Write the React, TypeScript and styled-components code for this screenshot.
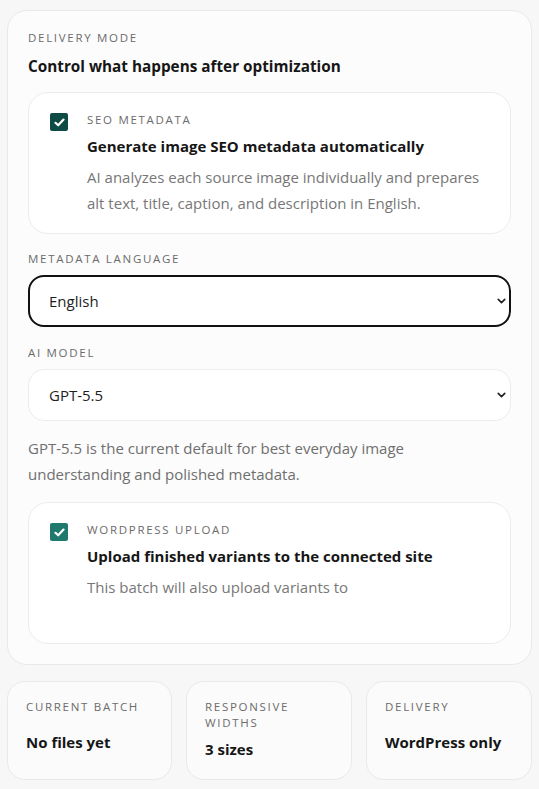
import React from 'react';
import styled, { createGlobalStyle } from 'styled-components';
import { ChevronDown } from 'lucide-react';

const GlobalStyle = createGlobalStyle`
  html, body {
    margin: 0;
    padding: 0;
    background: #f7f7f7;
  }
  body {
    font-family: 'Open Sans', 'Noto Sans', Arial, sans-serif;
    color: #1c1c1c;
  }
  * {
    box-sizing: border-box;
  }
`;

const Page = styled.div`
  padding: 10px 7px 11px 7px;
  display: flex;
  flex-direction: column;
  gap: 16px;
`;

const Panel = styled.section`
  background: #fcfcfc;
  border: 1px solid #e9e9e9;
  border-radius: 20px;
  padding: 19px 20px 20px 20px;
  display: flex;
  flex-direction: column;
`;

const Eyebrow = styled.div<{ gap?: number }>`
  font-size: 11.5px;
  letter-spacing: 1.7px;
  text-transform: uppercase;
  color: #6b6b6b;
  line-height: 16px;
  margin-bottom: ${({ gap }) => gap ?? 0}px;
`;

const PanelTitle = styled.h2`
  margin: 9px 0 15px 0;
  font-size: 15.3px;
  font-weight: 700;
  line-height: 22px;
  color: #161616;
`;

const OptionCard = styled.label<{ gapAfter?: number }>`
  display: flex;
  gap: 19px;
  background: #ffffff;
  border: 1px solid #ececec;
  border-radius: 20px;
  padding: 19px 20px 17px 21px;
  margin-bottom: ${({ gapAfter }) => gapAfter ?? 0}px;
`;

const Check = styled.span<{ tone: string }>`
  flex: none;
  width: 18px;
  height: 18px;
  margin-top: 1px;
  border-radius: 2px;
  background: ${({ tone }) => tone};
  display: flex;
  align-items: center;
  justify-content: center;
`;

const OptionBody = styled.div`
  display: flex;
  flex-direction: column;
`;

const OptionTitle = styled.div`
  margin-top: 7px;
  font-size: 15px;
  font-weight: 700;
  line-height: 22px;
  color: #161616;
`;

const OptionText = styled.p`
  margin: 7px 0 0 0;
  font-size: 15px;
  line-height: 26px;
  color: #777777;
  min-height: 52px;
`;

const SelectWrap = styled.div<{ gapAfter?: number }>`
  position: relative;
  margin-bottom: ${({ gapAfter }) => gapAfter ?? 0}px;
`;

const Select = styled.select<{ focused?: boolean }>`
  width: 100%;
  height: 52px;
  appearance: none;
  -webkit-appearance: none;
  font-family: 'Open Sans', 'Noto Sans', Arial, sans-serif;
  font-size: 15px;
  color: #1e1e1e;
  background: #ffffff;
  border: ${({ focused }) => (focused ? '2px solid #111111' : '1px solid #ececec')};
  border-radius: 16px;
  padding: 0 40px 0 ${({ focused }) => (focused ? 19 : 20)}px;
  outline: none;
`;

const Chevron = styled(ChevronDown)`
  position: absolute;
  right: 3px;
  top: 50%;
  transform: translateY(-50%);
  pointer-events: none;
  color: #222;
`;

const Helper = styled.p`
  margin: 14px 0 15px 0;
  max-width: 400px;
  font-size: 15px;
  line-height: 26px;
  color: #6f6f6f;
`;

const StatRow = styled.div`
  display: grid;
  grid-template-columns: 165px 166px 166px;
  justify-content: space-between;
`;

const StatCard = styled.div`
  background: #fbfbfb;
  border: 1px solid #e9e9e9;
  border-radius: 18px;
  height: 99px;
  padding: 17px 18px 0 18px;
  display: flex;
  flex-direction: column;
`;

const StatLabel = styled.div`
  font-size: 11.5px;
  letter-spacing: 1.7px;
  text-transform: uppercase;
  color: #6b6b6b;
  line-height: 16px;
`;

const StatValue = styled.div<{ wrapped?: boolean }>`
  margin-top: ${({ wrapped }) => (wrapped ? 7 : 16)}px;
  font-size: 15px;
  font-weight: 700;
  line-height: 22px;
  color: #161616;
`;

const Tick = () => (
  <svg width="11" height="9" viewBox="0 0 11 9" fill="none">
    <path d="M1.5 4.8 L4.2 7.3 L9.5 1.6" stroke="#fff" strokeWidth="2.2" strokeLinecap="round" strokeLinejoin="round" />
  </svg>
);

const stats = [
  { label: 'Current batch', value: 'No files yet' },
  { label: 'Responsive widths', value: '3 sizes', wrapped: true },
  { label: 'Delivery', value: 'WordPress only' },
];

export default function App() {
  return (
    <>
      <GlobalStyle />
      <Page>
        <Panel>
          <Eyebrow>Delivery mode</Eyebrow>
          <PanelTitle>Control what happens after optimization</PanelTitle>

          <OptionCard gapAfter={17}>
            <Check tone="#0f4b45">
              <Tick />
            </Check>
            <OptionBody>
              <Eyebrow>SEO metadata</Eyebrow>
              <OptionTitle>Generate image SEO metadata automatically</OptionTitle>
              <OptionText>
                AI analyzes each source image individually and prepares alt text, title, caption, and description in English.
              </OptionText>
            </OptionBody>
          </OptionCard>

          <Eyebrow gap={8}>Metadata language</Eyebrow>
          <SelectWrap gapAfter={18}>
            <Select focused defaultValue="English">
              <option>English</option>
              <option>German</option>
              <option>French</option>
            </Select>
            <Chevron size={13} strokeWidth={3} />
          </SelectWrap>

          <Eyebrow gap={8}>AI model</Eyebrow>
          <SelectWrap>
            <Select defaultValue="GPT-5.5">
              <option>GPT-5.5</option>
              <option>GPT-5</option>
            </Select>
            <Chevron size={13} strokeWidth={3} />
          </SelectWrap>

          <Helper>GPT-5.5 is the current default for best everyday image understanding and polished metadata.</Helper>

          <OptionCard>
            <Check tone="#1f7a6d">
              <Tick />
            </Check>
            <OptionBody>
              <Eyebrow>WordPress upload</Eyebrow>
              <OptionTitle>Upload finished variants to the connected site</OptionTitle>
              <OptionText>This batch will also upload variants to</OptionText>
            </OptionBody>
          </OptionCard>
        </Panel>

        <StatRow>
          {stats.map((s) => (
            <StatCard key={s.label}>
              <StatLabel>{s.label}</StatLabel>
              <StatValue wrapped={s.wrapped}>{s.value}</StatValue>
            </StatCard>
          ))}
        </StatRow>
      </Page>
    </>
  );
}
